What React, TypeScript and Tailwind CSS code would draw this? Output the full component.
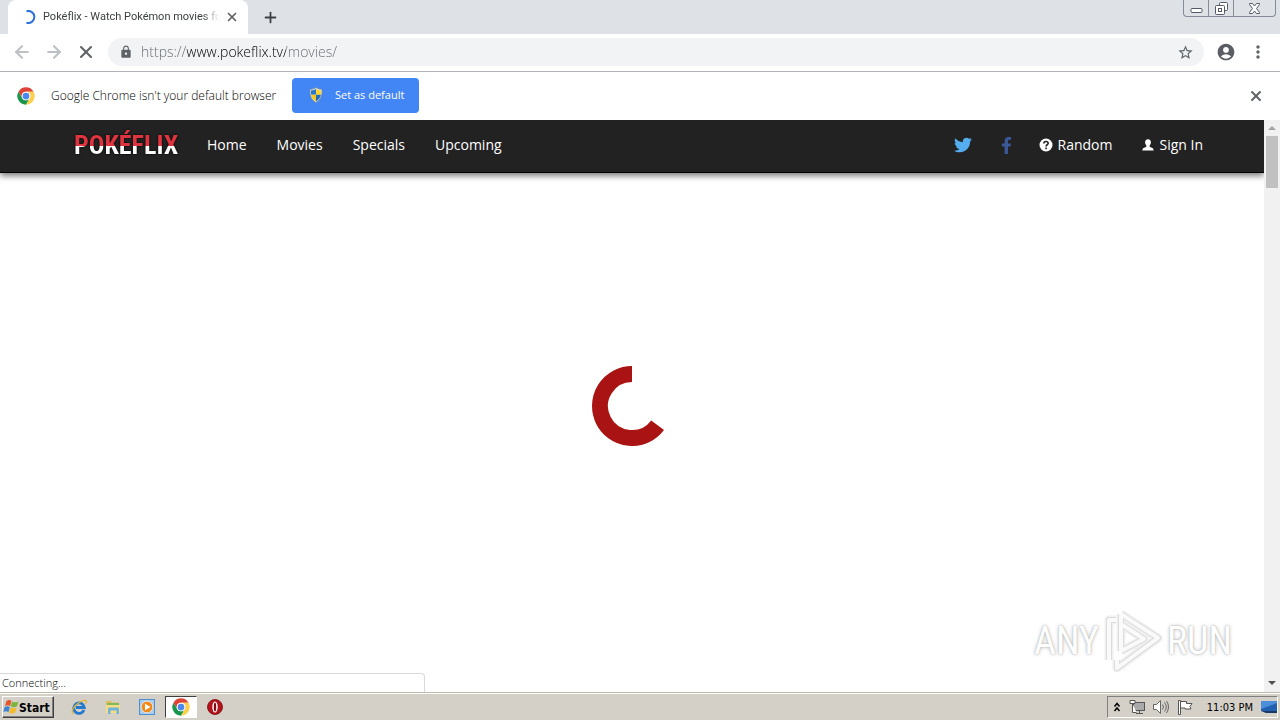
import type { ReactNode } from "react";
import { ArrowLeft, ArrowRight, Plus, X } from "lucide-react";
import { FaFacebookF, FaTwitter } from "react-icons/fa";
import { MdAccountCircle, MdLock, MdMoreVert, MdStarBorder } from "react-icons/md";

const navLinks = ["Home", "Movies", "Specials", "Upcoming"];

const ChromeLogo = () => (
  <svg viewBox="0 0 48 48" className="w-[18px] h-[18px] shrink-0" aria-hidden="true">
    <circle cx="24" cy="24" r="23" fill="#fff" />
    <path d="M4 12.500A23 23 0 0 1 44 12.500H24A11.500 11.500 0 0 0 14 29.800Z" fill="#de4337" />
    <path d="M4 12.500A23 23 0 0 0 24 47L34 29.800A11.500 11.500 0 0 1 14 29.800Z" fill="#19964c" />
    <path d="M44 12.500A23 23 0 0 1 24 47L34 29.800A11.500 11.500 0 0 0 24 12.500Z" fill="#fcd04b" />
    <circle cx="24" cy="24" r="11.500" fill="#fff" />
    <circle cx="24" cy="24" r="9" fill="#4a87ee" />
  </svg>
);

const ShieldIcon = () => (
  <svg viewBox="0 0 16 16" className="w-4 h-4" aria-hidden="true">
    <path d="M8 .5c2 1.300 4 1.800 6 1.700.4 6-1 10.500-6 13.300C3 12.700 1.600 8.200 2 2.200 4 2.300 6 1.800 8 .5Z" fill="#dbe6ee" stroke="#71828c" strokeWidth=".7" />
    <path d="M8 2v5.800H3.100C3 6.300 3 4.800 3 3.400 5 3.400 6.500 2.900 8 2Z" fill="#2c75c8" />
    <path d="M8 2v5.800h4.900c.1-1.500.1-3 .1-4.400C11 3.400 9.500 2.900 8 2Z" fill="#ffd52d" />
    <path d="M8 7.800H3.100C3.600 10.700 5 12.800 8 14.400Z" fill="#f7c91e" />
    <path d="M8 7.800h4.900c-.5 2.900-1.900 5-4.900 6.600Z" fill="#276bb7" />
  </svg>
);

const WindowButtons = () => (
  <div className="flex h-[17px] w-[93px] rounded-b border border-t-0 border-[#878c98] text-[#555a66]">
    <button aria-label="Minimize" className="flex w-[25px] items-center justify-center border-r border-[#878c98]">
      <svg viewBox="0 0 13 13" className="w-[13px] h-[13px]">
        <rect x="1" y="6.500" width="11" height="4" rx="1" fill="#fff" stroke="currentColor" />
      </svg>
    </button>
    <button aria-label="Restore" className="flex w-[25px] items-center justify-center border-r border-[#878c98]">
      <svg viewBox="0 0 13 13" className="w-[13px] h-[13px]" fill="#fff" stroke="currentColor">
        <rect x="4.500" y=".5" width="8" height="8" rx="1" />
        <rect x=".5" y="3.500" width="9" height="9" rx="1" />
        <rect x="3.500" y="6.500" width="3" height="3" />
      </svg>
    </button>
    <button aria-label="Close" className="flex flex-1 items-center justify-center">
      <svg viewBox="0 0 13 13" className="w-[13px] h-[13px]">
        <path d="M1.500 1.500h3l2 2.500 2-2.500h3v1L8.500 6.500l3 4v1h-3l-2-2.500-2 2.500h-3v-1l3-4-3-4Z" fill="#fff" stroke="currentColor" />
      </svg>
    </button>
  </div>
);

const TabStrip = () => (
  <div className="flex h-[34px] items-start bg-[#dee1e6] pl-2">
    <div className="flex h-full w-60 items-center rounded-t-lg bg-white pl-4 pr-2">
      <svg viewBox="0 0 16 16" className="w-4 h-4 shrink-0" aria-hidden="true">
        <path d="M2.500 2.300A6 6 0 1 1 2.500 13.700" fill="none" stroke="#2a6fdb" strokeWidth="2" />
      </svg>
      <span className="ml-[3px] w-[176px] overflow-hidden whitespace-nowrap font-[Roboto] text-[11px] text-[#3c4043] [mask-image:linear-gradient(90deg,#000_160px,transparent)]">
        Pokéflix - Watch Pokémon movies for
      </span>
      <button aria-label="Close tab" className="ml-[6px] text-[#5f6368]">
        <X size={14} strokeWidth={3} />
      </button>
    </div>
    <button aria-label="New tab" className="ml-3 flex h-full w-5 items-center justify-center text-[#3c4043]">
      <Plus size={17} strokeWidth={2.500} />
    </button>
    <div className="ml-auto pr-1">
      <WindowButtons />
    </div>
  </div>
);

const Toolbar = () => (
  <div className="flex h-[38px] items-center border-b border-[#b0b2b7] bg-white px-3 pb-px">
    <button aria-label="Back" className="mr-3 text-[#bdc0c4]">
      <ArrowLeft size={20} strokeWidth={2.500} />
    </button>
    <button aria-label="Forward" className="mr-3 text-[#bdc0c4]">
      <ArrowRight size={20} strokeWidth={2.500} />
    </button>
    <button aria-label="Stop" className="mr-3 text-[#5f6368]">
      <X size={20} strokeWidth={2.500} />
    </button>
    <div className="flex h-7 flex-1 items-center rounded-full bg-[#f1f3f4] pl-[11px] pr-[10px]">
      <MdLock size={14} className="shrink-0 text-[#5f6368]" />
      <input
        aria-label="Address"
        defaultValue="https://www.pokeflix.tv/movies/"
        className="ml-2 flex-1 bg-[linear-gradient(90deg,#65696e_46px,#000_46px,#000_145px,#65696e_145px)] bg-clip-text text-sm font-light text-transparent outline-none"
      />
      <button aria-label="Bookmark" className="text-[#5f6368]">
        <MdStarBorder size={17} />
      </button>
    </div>
    <button aria-label="Profile" className="ml-3 text-[#5a5d63]">
      <MdAccountCircle size={20} />
    </button>
    <button aria-label="Menu" className="ml-3 text-[#5f6368]">
      <MdMoreVert size={20} />
    </button>
  </div>
);

const InfoBar = () => (
  <div className="flex h-12 items-center bg-white pl-[17px] pr-4">
    <ChromeLogo />
    <span className="ml-4 w-[228px] whitespace-nowrap text-xs font-light text-black">
      Google Chrome isn't your default browser
    </span>
    <button className="mb-[2px] ml-[13px] flex h-[35px] w-[127px] items-center rounded bg-[#4285f4] pl-4 text-[11px] text-white">
      <ShieldIcon />
      <span className="ml-[11px]">Set as default</span>
    </button>
    <button aria-label="Dismiss" className="ml-auto text-[#5f6368]">
      <X size={16} strokeWidth={3} />
    </button>
  </div>
);

const SiteNav = () => (
  <nav className="absolute inset-x-0 top-0 z-10 flex h-[53px] items-center border-b border-black bg-[#222] pb-[2px] pl-[74px] pr-[46px] text-sm text-white shadow-[0_3px_6px_rgba(0,0,0,0.5)]">
    <a
      href="#"
      className="mr-3 w-[106px] bg-[linear-gradient(#dd3440_54%,#fff_54%)] bg-clip-text font-['Roboto_Condensed','Liberation_Sans'] text-[26px] leading-8 font-bold text-transparent drop-shadow-[0_0_1px_#000]"
    >
      POKÉFLIX
    </a>
    {navLinks.map((link) => (
      <a key={link} href="#" className="px-[15px]">
        {link}
      </a>
    ))}
    <div className="ml-auto flex items-center">
      <a href="#" aria-label="Twitter" className="px-[15px] text-[#55acee]">
        <FaTwitter size={18} />
      </a>
      <a href="#" aria-label="Facebook" className="px-[11px] text-[#3b5998]">
        <FaFacebookF size={17} />
      </a>
      <a href="#" className="flex items-center gap-[5px] pl-[13px] pr-[15px]">
        <svg viewBox="0 0 14 14" className="w-[14px] h-[14px]" aria-hidden="true">
          <circle cx="7" cy="7" r="6.500" fill="#fff" />
          <path d="M4.800 5.500C4.800 2.800 9.200 2.800 9.200 5.300 9.200 6.800 7.100 6.700 7.100 8.400M7.100 9.600v1.700" fill="none" stroke="#222" strokeWidth="1.600" />
        </svg>
        Random
      </a>
      <a href="#" className="flex items-center gap-[5px] px-[15px]">
        <svg viewBox="0 0 12 12" className="w-3 h-3" aria-hidden="true" fill="#fff">
          <path d="M6 .3C8 .3 9 1.600 8.900 3.500 8.800 5 8.200 5.800 7.600 6.500c-.3.900.1 1.300 1 1.700 1.900.8 3 1 3 3.300H.4c0-2.300 1.100-2.500 3-3.300.9-.4 1.300-.8 1-1.700C3.800 5.800 3.200 5 3.100 3.500 3 1.600 4 .3 6 .3Z" />
        </svg>
        Sign In
      </a>
    </div>
  </nav>
);

const Spinner = () => (
  <svg viewBox="0 0 80 80" className="w-20 h-20" role="img" aria-label="Loading">
    <path d="M40 8A32 32 0 1 0 65.600 59.200" fill="none" stroke="#a91313" strokeWidth="16" />
  </svg>
);

const Watermark = () => (
  <div className="absolute right-8 bottom-5 flex items-center font-['Roboto_Condensed','Liberation_Sans'] text-[38px] leading-[62px] text-white [text-shadow:0_0_2px_#aaa,0_0_4px_#ccc]">
    <span>ANY</span>
    <svg viewBox="0 0 60 62" className="mx-1 h-[62px] w-[60px]" fill="none" strokeLinejoin="round" aria-hidden="true">
      <g stroke="#f0f0f0" strokeWidth="9">
        <path d="M18 4v37M18 4l37 24-41 30V50M6 50V10h7M18 41l23-12-23-15" />
      </g>
      <g stroke="#dcdcdc" strokeWidth="6">
        <path d="M18 4v37M18 4l37 24-41 30V50M6 50V10h7M18 41l23-12-23-15" />
      </g>
      <g stroke="#fafafa" strokeWidth="4">
        <path d="M18 4v37M18 4l37 24-41 30V50M6 50V10h7M18 41l23-12-23-15" />
      </g>
    </svg>
    <span>RUN</span>
  </div>
);

const Scrollbar = () => (
  <div className="flex w-4 shrink-0 flex-col items-center bg-[#f1f1f1]">
    <button aria-label="Scroll up" className="flex h-4 w-full items-center justify-center">
      <svg viewBox="0 0 8 4" className="w-2 h-1">
        <path d="M0 4 4 0l4 4Z" fill="#a3a3a3" />
      </svg>
    </button>
    <div className="h-[52px] w-3 bg-[#c1c1c1]" />
    <button aria-label="Scroll down" className="mt-auto flex h-[18px] w-full items-center justify-center">
      <svg viewBox="0 0 8 4" className="w-2 h-1">
        <path d="M0 0h8L4 4Z" fill="#505050" />
      </svg>
    </button>
  </div>
);

const TaskButton = ({ label, active, children }: { label: string; active?: boolean; children: ReactNode }) => (
  <button
    aria-label={label}
    className={
      active
        ? "flex h-[22px] w-8 items-center justify-center border border-t-[#404040] border-l-[#404040] border-r-white border-b-white bg-white"
        : "flex h-[22px] w-8 items-center justify-center"
    }
  >
    {children}
  </button>
);

const Taskbar = () => (
  <div className="flex h-7 shrink-0 items-center border-t border-[#bdbaae] bg-[#d4d0c8] pl-[2px] pr-[2px] shadow-[inset_0_1px_0_#fff]">
    <button className="flex h-[22px] w-[52px] items-center border border-t-white border-l-white border-r-[#404040] border-b-[#404040] font-['DejaVu_Sans_Condensed','DejaVu_Sans'] text-xs font-bold text-black shadow-[inset_-1px_-1px_0_#808080]">
      <svg viewBox="0 0 16 16" className="w-4 h-4 shrink-0" aria-hidden="true">
        <path d="M3.500 2c2-1.500 3.500-1.200 5 0L7.200 7C5.600 5.800 3.900 6 2 7Z" fill="#e4572b" />
        <path d="M9.200 2.500c2 1.200 4 1.200 6.300-.3L14 7.300c-2 1.300-4 1.300-6.100.1Z" fill="#7db43c" />
        <path d="M1.700 8c2-1.200 3.600-1 5.200 0l-1.500 5.200c-1.600-1.200-3.300-1.200-5.200 0Z" fill="#3f82d0" />
        <path d="M7.600 8.500c2.100 1.100 4 1.100 6.100-.1l-1.500 5.200c-2.100 1.300-4 1.300-6.100.1Z" fill="#f5b92c" />
      </svg>
      <span className="pt-[2px] leading-4">Start</span>
    </button>
    <div className="ml-[9px] flex items-center gap-[2px]">
      <TaskButton label="Internet Explorer">
        <svg viewBox="0 0 16 16" className="w-4 h-4" fill="none">
          <path d="M13 11A5.300 5.300 0 1 1 13.300 8.500H5" stroke="#2479cf" strokeWidth="2.800" />
          <path d="M2.500 14.500C.5 14.500.5 11 4 7S13 .8 14.800 1.600c1 .6.6 2-.2 3.200" stroke="#e5b52d" strokeWidth="1.200" />
        </svg>
      </TaskButton>
      <TaskButton label="Explorer">
        <svg viewBox="0 0 16 16" className="w-4 h-4">
          <path d="M1 2h5l1 1.500h7V14H1Z" fill="#dfbd58" />
          <path d="M2 4h12v3H2Z" fill="#82b95c" />
          <path d="M1 6h14v8H1Z" fill="#f6dc82" />
          <path d="M3 15V10c0-1 .5-1.500 1.500-1.500h8c1 0 1.500.5 1.500 1.500v5h-2.500v-3.500h-6V15Z" fill="#6fb4dc" />
        </svg>
      </TaskButton>
      <TaskButton label="Media Player">
        <svg viewBox="0 0 16 16" className="w-4 h-4">
          <rect x=".5" y=".5" width="15" height="15" fill="#a9cdee" stroke="#4c8fcf" />
          <circle cx="8" cy="8" r="5.800" fill="#f28a1c" stroke="#fff" strokeWidth=".6" />
          <path d="m6 4.800 5.500 3.200L6 11.200Z" fill="#fff" />
        </svg>
      </TaskButton>
      <TaskButton label="Chrome" active>
        <ChromeLogo />
      </TaskButton>
      <TaskButton label="Opera">
        <svg viewBox="0 0 16 16" className="w-4 h-4">
          <circle cx="8" cy="8" r="7.500" fill="#b5121b" stroke="#74070d" strokeWidth=".8" />
          <ellipse cx="8" cy="8" rx="2.700" ry="5.500" fill="#fff" />
          <ellipse cx="8" cy="8" rx="1.200" ry="4.500" fill="#7f0c12" />
        </svg>
      </TaskButton>
    </div>
    <div className="ml-auto flex h-[22px] items-center border border-t-[#808080] border-l-[#808080] border-r-white border-b-white pl-[5px] text-black">
      <button aria-label="Show hidden icons">
        <svg viewBox="0 0 8 10" className="w-2 h-[10px]" fill="none" stroke="#000" strokeWidth="1.500">
          <path d="m1.500 4.500 2.500-3 2.500 3M1.500 9 4 6l2.500 3" />
        </svg>
      </button>
      <svg viewBox="0 0 16 16" className="ml-2 w-4 h-4" fill="#fff" stroke="#555">
        <rect x="4.500" y="3.500" width="11" height="8" fill="#aaa" />
        <path d="M7 14.500h7M10.500 12v2" />
        <path d="M1 1.500h5v3H1ZM3.500 4.500v9h4" />
      </svg>
      <svg viewBox="0 0 16 16" className="ml-2 w-4 h-4" fill="none" stroke="#666">
        <path d="M.5 5.500h3l4-4v13l-4-4h-3Z" fill="#fff" />
        <path d="M9.500 5.500q2 2.500 0 5M11.500 3.500q3.500 4.500 0 9M13.500 2q4 6 0 12" />
      </svg>
      <svg viewBox="0 0 16 16" className="ml-2 w-4 h-4" fill="#fff" stroke="#555">
        <path d="M1.500 1.500h2v14h-2ZM3.500 2.500h6v2h5.500l-2 3 1 2.500H8V9H3.500Z" />
      </svg>
      <time className="ml-[14px] pt-[2px] font-['DejaVu_Sans_Condensed','DejaVu_Sans'] text-[11px] leading-4">11:03 PM</time>
      <svg viewBox="0 0 16 14" className="ml-2 h-[14px] w-4" aria-hidden="true">
        <path d="M0 1h16v10H0Z" fill="#2360b0" />
        <path d="M0 1h16v2L0 9Z" fill="#4b8fdb" />
        <path d="M0 11h16v2H5Z" fill="#163966" />
      </svg>
    </div>
  </div>
);

const App = () => {
  return (
    <div className="flex h-screen flex-col overflow-hidden bg-white font-['Open_Sans','Noto_Sans',sans-serif]">
      <TabStrip />
      <Toolbar />
      <InfoBar />
      <div className="flex min-h-0 flex-1">
        <main className="relative flex flex-1 items-center justify-center overflow-hidden">
          <SiteNav />
          <Spinner />
          <div className="absolute bottom-0 left-0 h-[19px] w-[425px] rounded-tr border border-b-0 border-l-0 border-[#d9d9d9] bg-white pl-[2px] text-[11px] leading-[18px] font-light text-black">
            Connecting...
          </div>
          <Watermark />
        </main>
        <Scrollbar />
      </div>
      <Taskbar />
    </div>
  );
};

export default App;
